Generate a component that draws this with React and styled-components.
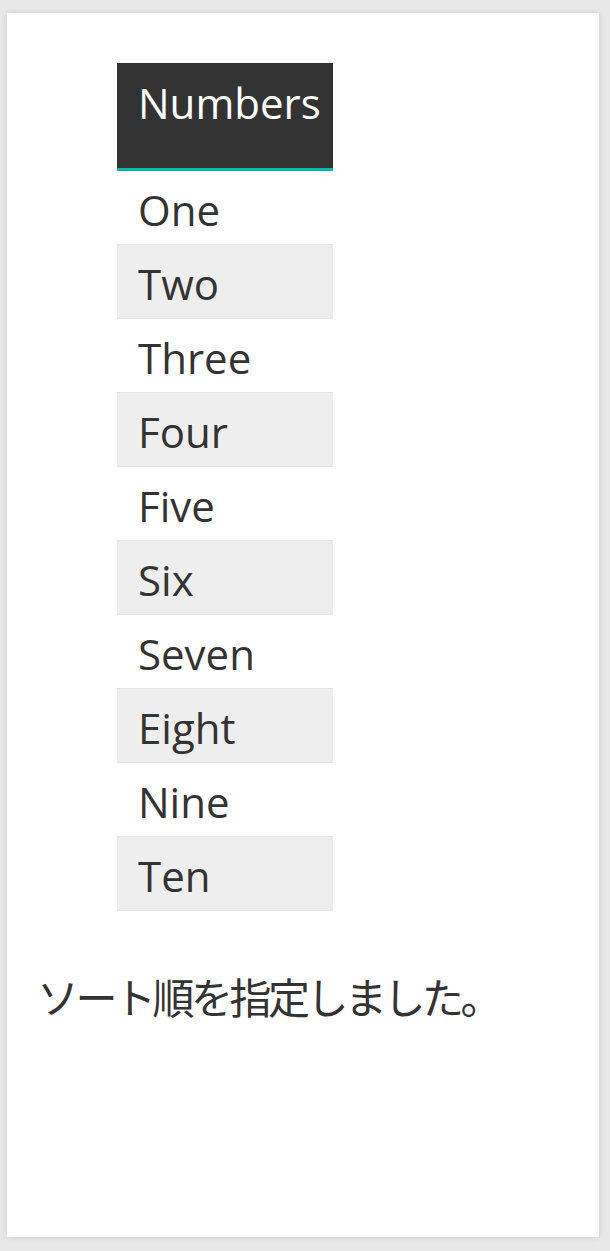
import React from "react";
import styled, { createGlobalStyle } from "styled-components";

const Global = createGlobalStyle`
  html, body { margin: 0; padding: 0; background: #e8e8e8; }
  body { font-family: "Open Sans", "Noto Sans CJK JP", sans-serif; }
`;

const Page = styled.div`
  padding: 13px 11px 14px 7px;
`;

const Card = styled.div`
  background: #ffffff;
  width: 592px;
  height: 1224px;
  box-shadow: 0 0 6px rgba(0, 0, 0, 0.12);
  display: flex;
  flex-direction: column;
  box-sizing: border-box;
  padding-top: 50px;
`;

const Table = styled.div`
  margin-left: 110px;
  width: 216px;
  display: flex;
  flex-direction: column;
`;

const Header = styled.div`
  height: 105px;
  background: #333333;
  border-bottom: 3px solid #01b8aa;
  color: #ffffff;
  font-size: 42px;
  line-height: 80px;
  padding-left: 21px;
  white-space: nowrap;
`;

const Row = styled.div`
  height: 73px;
  border-bottom: 1px solid #e4e4e4;
  background: ${(p) => (p.$alt ? "#eeeeee" : "#ffffff")};
  color: #333333;
  font-size: 42px;
  line-height: 78px;
  padding-left: 21px;
`;

const Caption = styled.div`
  margin-top: 60px;
  margin-left: 30px;
  font-family: "Noto Sans CJK JP", sans-serif;
  font-size: 42px;
  color: #333333;
  line-height: 50px;
  letter-spacing: -3.5px;
  white-space: nowrap;
`;

const items = ["One", "Two", "Three", "Four", "Five", "Six", "Seven", "Eight", "Nine", "Ten"];

export default function App() {
  return (
    <>
      <Global />
      <Page>
        <Card>
          <Table>
            <Header>Numbers</Header>
            {items.map((t, i) => (
              <Row key={t} $alt={i % 2 === 1}>{t}</Row>
            ))}
          </Table>
          <Caption>ソート順を指定しました。</Caption>
        </Card>
      </Page>
    </>
  );
}
